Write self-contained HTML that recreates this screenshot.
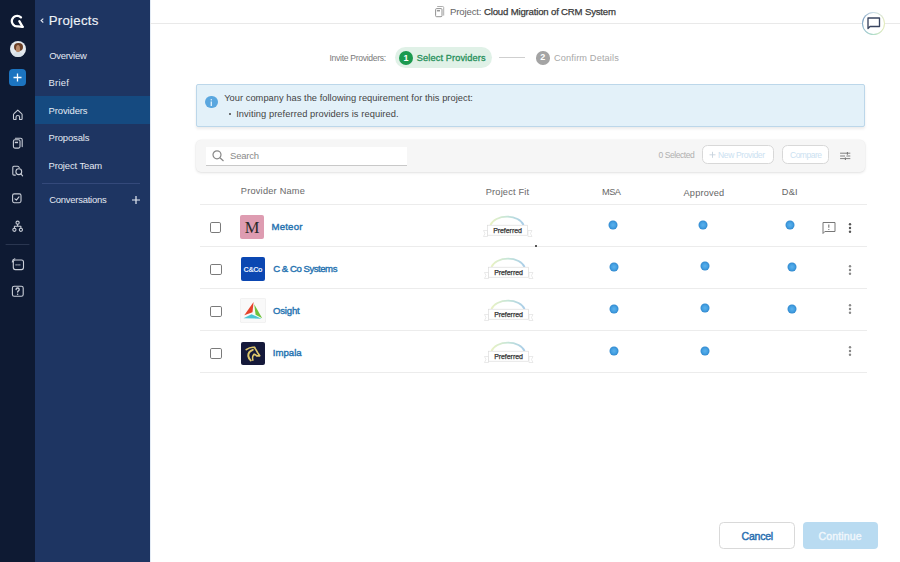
<!DOCTYPE html>
<html><head><meta charset="utf-8">
<style>
*{margin:0;padding:0;box-sizing:border-box}
html,body{width:900px;height:562px;overflow:hidden;background:#fff;font-family:"Liberation Sans",sans-serif;position:relative}
.a{position:absolute;white-space:nowrap}
.cb{width:11.6px;height:11.4px;border:1.8px solid #7a7a7a;border-radius:1.8px}
.logo{width:24px;height:24px;border-radius:2px}
.dot{width:8.6px;height:8.6px;margin:0.2px 0 0 0.2px;border-radius:50%;background:radial-gradient(circle at 50% 50%,#58afec 0,#44a0e2 50%,#2f86cc 100%)}
.line{height:1px;background:#ececec}
.keb{width:3px}
.keb i{display:block;width:2.6px;height:2.6px;border-radius:50%;background:#555;margin-bottom:1.2px}
</style></head><body>
<!-- icon rail -->
<div class="a" style="left:0;top:0;width:35px;height:562px;background:#0e1a33"></div>
<div class="a" style="left:35px;top:0;width:115px;height:562px;background:#1e3562"></div>
<div class="a" style="left:35px;top:96px;width:115px;height:27.5px;background:#154a80"></div>
<div class="a" style="left:150px;top:0;width:1px;height:562px;background:#e3ebf5"></div>

<!-- G logo -->
<svg class="a" style="left:10px;top:14px" width="16" height="16" viewBox="0 0 16 16" fill="none" stroke="#fff" stroke-width="2.3" stroke-linejoin="round" stroke-linecap="round">
<path d="M10.9 3.4 A5.3 5.3 0 1 0 7.9 12.4 L12.6 12.8"/>
<path d="M9.3 7.2 L12.6 12.8"/>
</svg>
<!-- avatar -->
<div class="a" style="left:9.7px;top:41.2px;width:16px;height:16px;border-radius:50%;background:#e4e9ee;overflow:hidden">
 <div class="a" style="left:4.3px;top:1.8px;width:8.6px;height:8.4px;border-radius:50%;background:#6b4027"></div>
 <div class="a" style="left:6px;top:3.6px;width:4px;height:8px;border-radius:50%;background:#b98a6a"></div>
 <div class="a" style="left:3px;top:11px;width:10px;height:7px;border-radius:50%;background:#d7e0e8"></div>
</div>
<!-- plus -->
<div class="a" style="left:9px;top:69px;width:17px;height:17px;border-radius:4px;background:#1c74c0"></div>
<svg class="a" style="left:9px;top:69px" width="17" height="17"><path d="M8.5 4.5v8M4.5 8.5h8" stroke="#fff" stroke-width="1.3"/></svg>

<!-- rail icons -->
<svg class="a" style="left:0;top:100px" width="35" height="210" viewBox="0 0 35 210" fill="none" stroke="#c9ced8" stroke-width="1.1" stroke-linejoin="round" stroke-linecap="round">
 <path d="M13.5 18.8 V14.6 Q13.5 14 14 13.6 L17.8 10.1 L21.6 13.6 Q22.1 14 22.1 14.6 V18.8 Q22.1 19.5 21.4 19.5 H19.6 V17.3 a1.8 1.8 0 0 0 -3.6 0 V19.5 H14.2 Q13.5 19.5 13.5 18.8 Z"/>
 <rect x="13.4" y="39.8" width="6.6" height="8.3" rx="1.5"/>
 <path d="M15.4 38.2 H20.7 a1.5 1.5 0 0 1 1.5 1.5 V46.6"/>
 <rect x="14.8" y="41.7" width="3.2" height="1.5" fill="#c9ced8" stroke="none"/>
 <path d="M19.2 67.6 Q18.8 66.3 17.6 66.3 H13.8 Q12.8 66.3 12.8 67.3 V73.9 Q12.8 75.1 14 75.1 H15.4"/>
 <circle cx="18.8" cy="71.7" r="2.9"/>
 <path d="M20.9 73.9 L22.6 75.8"/>
 <rect x="12.6" y="93.9" width="8.4" height="8.8" rx="1.6"/>
 <path d="M14.9 98.8 L16.4 100.1 L19 96.9"/>
 <circle cx="17.6" cy="122.7" r="1.6"/>
 <circle cx="14.4" cy="129.8" r="1.6"/>
 <circle cx="20.9" cy="129.8" r="1.6"/>
 <path d="M17.6 124.3 V126.2 M14.4 128.2 V126.2 H20.9 V128.2"/>
 <path d="M6 144.5 H29" stroke="#2a3650" stroke-width="1"/>
 <rect x="13.3" y="160" width="10.2" height="9.6" rx="2"/>
 <path d="M12.3 162 a3.6 3.6 0 0 1 2.6-3.2"/>
 <path d="M15.6 164.9 h4.6" stroke-width="0.7" stroke-dasharray="1 0.5"/>
 <rect x="12.4" y="186.2" width="10.8" height="10" rx="1.8"/>
 <path d="M16.1 189.6 a1.55 1.55 0 1 1 2.3 1.3 c-0.55 0.3 -0.75 0.6 -0.75 1.2" stroke-width="1.35"/>
 <circle cx="17.65" cy="194.3" r="0.75" fill="#c9ced8" stroke="none"/>
</svg>

<!-- sidebar -->
<svg class="a" style="left:39px;top:16px" width="7" height="9"><path d="M4.3 2.7 L2.1 4.6 L4.3 6.5" fill="none" stroke="#e6ebf3" stroke-width="1.1"/></svg>
<div class="a" style="left:42px;top:183px;width:98px;height:1px;background:#34497a"></div>
<svg class="a" style="left:131px;top:195px" width="10" height="10"><path d="M5 1v8M1 5h8" stroke="#e6ebf3" stroke-width="1.2"/></svg>

<!-- header -->
<div class="a line" style="left:150px;top:23px;width:750px;background:#e9e9e9"></div>
<svg class="a" style="left:434px;top:5px" width="12" height="13" viewBox="0 0 12 13" fill="none" stroke="#8c8c8c" stroke-width="0.95">
 <rect x="1.6" y="3.6" width="6.4" height="8.1" rx="1"/>
 <path d="M3.2 1.5 H8.7 a1 1 0 0 1 1 1 V10.6" stroke="#aaa"/>
 <path d="M2.9 5.8 H6" stroke="#777" stroke-width="1.1"/>
</svg>

<!-- chat circle -->
<div class="a" style="left:862px;top:12px;width:23.3px;height:23.3px;border-radius:50%;background:conic-gradient(#c8dce6 0deg,#e6ecc0 80deg,#dfe9b8 120deg,#b2dfca 180deg,#8ab4cc 250deg,#7d9fc0 290deg,#c8dce6 360deg)"></div><div class="a" style="left:863.1px;top:13.1px;width:21.1px;height:21.1px;border-radius:50%;background:#fff"></div>
<svg class="a" style="left:866px;top:16px" width="15" height="14" viewBox="0 0 15 14"><path d="M2 12.5 V2 H13.5 V10.5 H4 Z" fill="none" stroke="#3a4560" stroke-width="1.35" stroke-linejoin="round"/></svg>

<!-- stepper -->
<div class="a" style="left:395px;top:47px;width:96.5px;height:21px;border-radius:11px;background:#e0f1e7"></div>
<div class="a" style="left:399px;top:51px;width:14px;height:14px;border-radius:50%;background:#1b9a4f;color:#fff;font-size:9px;line-height:14px;text-align:center;font-weight:bold">1</div>
<div class="a" style="left:499px;top:57px;width:26px;height:1px;background:#cfcfcf"></div>
<div class="a" style="left:536px;top:51px;width:13.5px;height:13.5px;border-radius:50%;background:#a4a4a4;color:#fff;font-size:9px;line-height:13.5px;text-align:center;font-weight:bold">2</div>

<!-- info box -->
<div class="a" style="left:196px;top:84px;width:669px;height:43px;background:#e3f1f9;border:1px solid #bcd7ea;border-radius:2px;box-shadow:0 2px 3px rgba(0,0,0,0.08)"></div>
<div class="a" style="left:205px;top:95.7px;width:12.6px;height:12.6px;border-radius:50%;background:#5aa7df"></div>
<svg class="a" style="left:205px;top:95.7px" width="13" height="13"><path d="M6.3 5.6 V10" stroke="#e4f2fc" stroke-width="1.3"/><circle cx="6.3" cy="3.7" r="0.75" fill="#e4f2fc"/></svg>
<div class="a" style="left:229px;top:112.5px;width:2.2px;height:2.2px;border-radius:50%;background:#444"></div>

<!-- toolbar -->
<div class="a" style="left:195.5px;top:139.6px;width:669.5px;height:32.6px;background:#f6f6f6;border-radius:5px;box-shadow:0 1px 3px rgba(0,0,0,0.11),0 0 0 0.5px rgba(0,0,0,0.03)"></div>
<div class="a" style="left:205.5px;top:146.5px;width:201px;height:19px;background:#fff;border-bottom:1px solid #c8c8c8"></div>
<svg class="a" style="left:211px;top:149px" width="14" height="13" fill="none" stroke="#888" stroke-width="1.2"><circle cx="6" cy="5.8" r="4"/><path d="M8.9 8.7 L12.5 12"/></svg>
<div class="a" style="left:702px;top:145.2px;width:71.5px;height:18.5px;border-radius:5.5px;border:1px solid #d8d8d8;background:#fff"></div>
<svg class="a" style="left:708px;top:150px" width="9" height="9"><path d="M4.5 1.8v6M1.5 4.8h6" stroke="#c6d3dd" stroke-width="0.9"/></svg>
<div class="a" style="left:782px;top:145.2px;width:47.3px;height:18.5px;border-radius:5.5px;border:1px solid #d8d8d8;background:#fff"></div>
<svg class="a" style="left:839px;top:150px" width="13" height="11" fill="none" stroke="#7a7a7a" stroke-width="0.95"><path d="M1.1 3.2h10.2M1.1 6h4.9M7.4 6h3.9M1.1 8.6h10.2"/><path d="M8.4 2.1v2.6M6.4 7.4v2.5" stroke-width="1.1"/></svg>

<!-- table lines -->
<div class="a line" style="left:200px;top:204px;width:667px"></div>
<div class="a line" style="left:200px;top:246px;width:667px"></div>
<div class="a line" style="left:200px;top:288px;width:667px"></div>
<div class="a line" style="left:200px;top:330px;width:667px"></div>
<div class="a line" style="left:200px;top:372px;width:667px"></div>

<!-- rows -->
<div class="a cb" style="left:209.5px;top:222px"></div>
<div class="a cb" style="left:210.3px;top:263.8px"></div>
<div class="a cb" style="left:210.4px;top:305.5px"></div>
<div class="a cb" style="left:210.4px;top:347.5px"></div>

<div class="a logo" style="left:240px;top:215px;background:#de9cb1;font-family:'Liberation Serif',serif;font-size:16.5px;line-height:26.5px;text-align:center;color:#2a2a2a">M</div>
<div class="a logo" style="left:241px;top:257.2px;height:23.6px;background:#0b47b2;color:#e8f0ff;font-size:7.3px;font-weight:bold;line-height:25.2px;text-align:center;letter-spacing:-0.45px;text-indent:-0.4px">C&amp;Co</div>
<div class="a logo" style="left:240.3px;top:298px;background:#f9f9f9;box-shadow:inset 0 0 0 0.6px #ececec;width:25.3px;height:25.3px">
 <svg width="25" height="25" viewBox="0 0 25 25"><path d="M13.6 4 L4.3 17.2 L12.5 14.2 Z" fill="#e5432b"/><path d="M14.2 6.2 L15.6 16.8 L22.2 20.2 Z" fill="#6fc23b"/><path d="M3.5 20.2 L11.5 16.2 L21.6 20.8 Z" fill="#48c6d3"/></svg>
</div>
<div class="a logo" style="left:241.2px;top:341.5px;width:23.5px;height:23.2px;background:#15193a">
 <svg width="24" height="24" viewBox="0 0 24 24" fill="none" stroke="#dfc86c" stroke-linecap="round" stroke-linejoin="round"><path d="M5.2 7.6 Q9.5 4.6 13.6 5.4" stroke-width="1.7"/><path d="M13.6 5.6 Q15.2 8 16.6 10.6 L18.7 13.8 L15.8 13.9 Q14.5 12.2 13 12.3" stroke-width="1.7"/><path d="M11.8 7.9 Q7 9.8 7.3 14 Q7.8 17 9.8 18.5" stroke-width="2"/><path d="M13.2 12.5 Q10.8 14 11.9 18.2" stroke-width="1.5"/></svg>
</div>

<!-- badges -->
<svg width="0" height="0" style="position:absolute">
 <defs>
  <linearGradient id="g1" x1="0" x2="1"><stop offset="0" stop-color="#e9f2c4"/><stop offset="0.5" stop-color="#c6e5d8"/><stop offset="1" stop-color="#a9cde8"/></linearGradient>
  
 </defs>
</svg>
<svg class="a" style="left:482px;top:214px" width="52" height="24"><path d="M8.5 11 A17 11 0 0 1 41.5 11" fill="none" stroke="url(#g1)" stroke-width="1.9"/>
   <path d="M1.5 16.5 H5.5 V22.5 H1.5 L3 19.5 Z" fill="#fff" stroke="#dcdcdc" stroke-width="0.6"/>
   <path d="M50 16.5 H46 V22.5 H50 L48.5 19.5 Z" fill="#fff" stroke="#dcdcdc" stroke-width="0.6"/>
   <rect x="5.5" y="11.2" width="40" height="10" fill="#fff" stroke="#d8d8d8" stroke-width="0.6"/>
   <text x="25.5" y="19" text-anchor="middle" font-family="Liberation Sans" font-size="7" letter-spacing="-0.05" fill="#333" stroke="#333" stroke-width="0.25">Preferred</text></svg>
<svg class="a" style="left:483px;top:256px" width="52" height="24"><path d="M8.5 11 A17 11 0 0 1 41.5 11" fill="none" stroke="url(#g1)" stroke-width="1.9"/>
   <path d="M1.5 16.5 H5.5 V22.5 H1.5 L3 19.5 Z" fill="#fff" stroke="#dcdcdc" stroke-width="0.6"/>
   <path d="M50 16.5 H46 V22.5 H50 L48.5 19.5 Z" fill="#fff" stroke="#dcdcdc" stroke-width="0.6"/>
   <rect x="5.5" y="11.2" width="40" height="10" fill="#fff" stroke="#d8d8d8" stroke-width="0.6"/>
   <text x="25.5" y="19" text-anchor="middle" font-family="Liberation Sans" font-size="7" letter-spacing="-0.05" fill="#333" stroke="#333" stroke-width="0.25">Preferred</text></svg>
<svg class="a" style="left:483px;top:298px" width="52" height="24"><path d="M8.5 11 A17 11 0 0 1 41.5 11" fill="none" stroke="url(#g1)" stroke-width="1.9"/>
   <path d="M1.5 16.5 H5.5 V22.5 H1.5 L3 19.5 Z" fill="#fff" stroke="#dcdcdc" stroke-width="0.6"/>
   <path d="M50 16.5 H46 V22.5 H50 L48.5 19.5 Z" fill="#fff" stroke="#dcdcdc" stroke-width="0.6"/>
   <rect x="5.5" y="11.2" width="40" height="10" fill="#fff" stroke="#d8d8d8" stroke-width="0.6"/>
   <text x="25.5" y="19" text-anchor="middle" font-family="Liberation Sans" font-size="7" letter-spacing="-0.05" fill="#333" stroke="#333" stroke-width="0.25">Preferred</text></svg>
<svg class="a" style="left:483px;top:340px" width="52" height="24"><path d="M8.5 11 A17 11 0 0 1 41.5 11" fill="none" stroke="url(#g1)" stroke-width="1.9"/>
   <path d="M1.5 16.5 H5.5 V22.5 H1.5 L3 19.5 Z" fill="#fff" stroke="#dcdcdc" stroke-width="0.6"/>
   <path d="M50 16.5 H46 V22.5 H50 L48.5 19.5 Z" fill="#fff" stroke="#dcdcdc" stroke-width="0.6"/>
   <rect x="5.5" y="11.2" width="40" height="10" fill="#fff" stroke="#d8d8d8" stroke-width="0.6"/>
   <text x="25.5" y="19" text-anchor="middle" font-family="Liberation Sans" font-size="7" letter-spacing="-0.05" fill="#333" stroke="#333" stroke-width="0.25">Preferred</text></svg>

<!-- dots -->
<svg width="0" height="0" style="position:absolute"><defs><radialGradient id="dg"><stop offset="0" stop-color="#5cb1ec"/><stop offset="0.6" stop-color="#44a0e2"/><stop offset="1" stop-color="#3088ce"/></radialGradient></defs></svg>
<svg class="a" style="left:606.6px;top:219.2px" width="12" height="12"><circle cx="6" cy="6" r="4.5" fill="url(#dg)"/></svg>
<svg class="a" style="left:697.2px;top:219.0px" width="12" height="12"><circle cx="6" cy="6" r="4.5" fill="url(#dg)"/></svg>
<svg class="a" style="left:784.2px;top:219.0px" width="12" height="12"><circle cx="6" cy="6" r="4.5" fill="url(#dg)"/></svg>
<svg class="a" style="left:608.0px;top:261.0px" width="12" height="12"><circle cx="6" cy="6" r="4.5" fill="url(#dg)"/></svg>
<svg class="a" style="left:698.5px;top:260.2px" width="12" height="12"><circle cx="6" cy="6" r="4.5" fill="url(#dg)"/></svg>
<svg class="a" style="left:785.6px;top:260.5px" width="12" height="12"><circle cx="6" cy="6" r="4.5" fill="url(#dg)"/></svg>
<svg class="a" style="left:608.0px;top:303.1px" width="12" height="12"><circle cx="6" cy="6" r="4.5" fill="url(#dg)"/></svg>
<svg class="a" style="left:698.5px;top:302.2px" width="12" height="12"><circle cx="6" cy="6" r="4.5" fill="url(#dg)"/></svg>
<svg class="a" style="left:785.6px;top:303.1px" width="12" height="12"><circle cx="6" cy="6" r="4.5" fill="url(#dg)"/></svg>
<svg class="a" style="left:608.0px;top:345.1px" width="12" height="12"><circle cx="6" cy="6" r="4.5" fill="url(#dg)"/></svg>
<svg class="a" style="left:698.5px;top:345.1px" width="12" height="12"><circle cx="6" cy="6" r="4.5" fill="url(#dg)"/></svg>
<!-- comment icon -->
<svg class="a" style="left:821px;top:221px" width="16" height="14" viewBox="0 0 16 14" fill="none" stroke="#777" stroke-width="1"><path d="M2 12.5 V1.5 H14 V10.5 H3.8 Z" stroke-linejoin="round"/><path d="M7.8 3.5 V6.8 M7.8 8 V9" stroke-width="1.1"/></svg>
<!-- kebabs -->
<svg class="a" style="left:846.50px;top:221.25px" width="6" height="14" fill="#555"><circle cx="3" cy="3.25" r="1.2"/><circle cx="3" cy="7" r="1.2"/><circle cx="3" cy="10.75" r="1.2"/></svg>
<svg class="a" style="left:847.40px;top:262.60px" width="6" height="14" fill="#888"><circle cx="3" cy="3.25" r="1.2"/><circle cx="3" cy="7" r="1.2"/><circle cx="3" cy="10.75" r="1.2"/></svg>
<svg class="a" style="left:847.40px;top:302.20px" width="6" height="14" fill="#888"><circle cx="3" cy="3.25" r="1.2"/><circle cx="3" cy="7" r="1.2"/><circle cx="3" cy="10.75" r="1.2"/></svg>
<svg class="a" style="left:847.40px;top:344.20px" width="6" height="14" fill="#888"><circle cx="3" cy="3.25" r="1.2"/><circle cx="3" cy="7" r="1.2"/><circle cx="3" cy="10.75" r="1.2"/></svg>
<!-- cursor dot -->
<div class="a" style="left:534.6px;top:244.8px;width:2px;height:2px;background:#222;border-radius:50%"></div>

<!-- footer buttons -->
<div class="a" style="left:719.2px;top:521.6px;width:75.6px;height:27.9px;border:1px solid #d9d9d9;border-radius:4.5px;background:#fff"></div>
<div class="a" style="left:803px;top:522.2px;width:74.5px;height:26.8px;border-radius:4px;background:#b9dbf1"></div>

<div class="a" style="left:48.70px;top:8.30px;font-size:13.2px;line-height:26.4px;letter-spacing:0.286px;color:#eef2f8;-webkit-text-stroke:0.15px #eef2f8">Projects</div>
<div class="a" style="left:49.20px;top:46.50px;font-size:9.45px;line-height:18.9px;letter-spacing:-0.257px;color:#e4e9f2">Overview</div>
<div class="a" style="left:48.50px;top:74.00px;font-size:9.45px;line-height:18.9px;letter-spacing:0.250px;color:#e4e9f2">Brief</div>
<div class="a" style="left:48.50px;top:101.50px;font-size:9.45px;line-height:18.9px;letter-spacing:-0.100px;color:#e4e9f2">Providers</div>
<div class="a" style="left:48.50px;top:129.00px;font-size:9.45px;line-height:18.9px;letter-spacing:-0.125px;color:#e4e9f2">Proposals</div>
<div class="a" style="left:48.50px;top:156.50px;font-size:9.45px;line-height:18.9px;letter-spacing:-0.109px;color:#e4e9f2">Project Team</div>
<div class="a" style="left:49.20px;top:191.00px;font-size:9.45px;line-height:18.9px;letter-spacing:-0.233px;color:#e4e9f2">Conversations</div>
<div class="a" style="left:450.00px;top:1.80px;font-size:9.6px;line-height:19.2px;letter-spacing:-0.143px;color:#666">Project:</div>
<div class="a" style="left:484.00px;top:1.80px;font-size:9.6px;line-height:19.2px;letter-spacing:-0.179px;color:#3a3a3a;-webkit-text-stroke:0.25px #3a3a3a">Cloud Migration of CRM System</div>
<div class="a" style="left:329.50px;top:50.00px;font-size:8.6px;line-height:17.2px;letter-spacing:-0.312px;color:#7a7a7a">Invite Providers:</div>
<div class="a" style="left:416.80px;top:49.20px;font-size:9.2px;line-height:18.4px;letter-spacing:0.120px;color:#26905a;-webkit-text-stroke:0.3px #26905a">Select Providers</div>
<div class="a" style="left:554.00px;top:49.20px;font-size:9.2px;line-height:18.4px;letter-spacing:0.143px;color:#a8a8a8">Confirm Details</div>
<div class="a" style="left:224.20px;top:89.00px;font-size:9.3px;line-height:18.6px;letter-spacing:0.034px;color:#444">Your company has the following requirement for this project:</div>
<div class="a" style="left:236.20px;top:105.00px;font-size:9.3px;line-height:18.6px;letter-spacing:0.080px;color:#444">Inviting preferred providers is required.</div>
<div class="a" style="left:230.10px;top:145.90px;font-size:9.5px;line-height:19.0px;letter-spacing:-0.240px;color:#8a8a8a">Search</div>
<div class="a" style="left:658.50px;top:147.00px;font-size:8.5px;line-height:17.0px;letter-spacing:-0.444px;color:#b0b0b0">0 Selected</div>
<div class="a" style="left:718.00px;top:147.00px;font-size:8.5px;line-height:17.0px;letter-spacing:-0.364px;color:#cbe1f1">New Provider</div>
<div class="a" style="left:790.00px;top:146.80px;font-size:8.5px;line-height:17.0px;letter-spacing:-0.500px;color:#cbe1f1">Compare</div>
<div class="a" style="left:240.80px;top:181.50px;font-size:9.2px;line-height:18.4px;letter-spacing:0.233px;color:#6e6e6e;-webkit-text-stroke:0.05px #6e6e6e">Provider Name</div>
<div class="a" style="left:485.80px;top:183.00px;font-size:9.2px;line-height:18.4px;letter-spacing:0.180px;color:#6e6e6e;-webkit-text-stroke:0.05px #6e6e6e">Project Fit</div>
<div class="a" style="left:601.90px;top:183.40px;font-size:9.2px;line-height:18.4px;letter-spacing:-0.400px;color:#666">MSA</div>
<div class="a" style="left:683.50px;top:184.00px;font-size:9.2px;line-height:18.4px;letter-spacing:0.200px;color:#666">Approved</div>
<div class="a" style="left:781.70px;top:182.80px;font-size:9.2px;line-height:18.4px;letter-spacing:0.333px;color:#666">D&amp;I</div>
<div class="a" style="left:271.50px;top:217.10px;font-size:9.6px;line-height:19.2px;letter-spacing:0.200px;color:#2472b0;-webkit-text-stroke:0.38px #2472b0">Meteor</div>
<div class="a" style="left:273.20px;top:259.10px;font-size:9.6px;line-height:19.2px;letter-spacing:-0.471px;color:#2472b0;-webkit-text-stroke:0.38px #2472b0">C &amp; Co Systems</div>
<div class="a" style="left:273.00px;top:300.90px;font-size:9.6px;line-height:19.2px;letter-spacing:-0.200px;color:#2472b0;-webkit-text-stroke:0.38px #2472b0">Osight</div>
<div class="a" style="left:272.70px;top:343.10px;font-size:9.6px;line-height:19.2px;letter-spacing:0.040px;color:#2472b0;-webkit-text-stroke:0.38px #2472b0">Impala</div>
<div class="a" style="left:741.50px;top:525.80px;font-size:10.5px;line-height:21.0px;letter-spacing:-0.200px;color:#2a6fb0;-webkit-text-stroke:0.45px #2a6fb0">Cancel</div>
<div class="a" style="left:818.50px;top:525.80px;font-size:10.5px;line-height:21.0px;letter-spacing:0.143px;color:#f0f7fc;-webkit-text-stroke:0.4px #f0f7fc">Continue</div>
</body></html>
